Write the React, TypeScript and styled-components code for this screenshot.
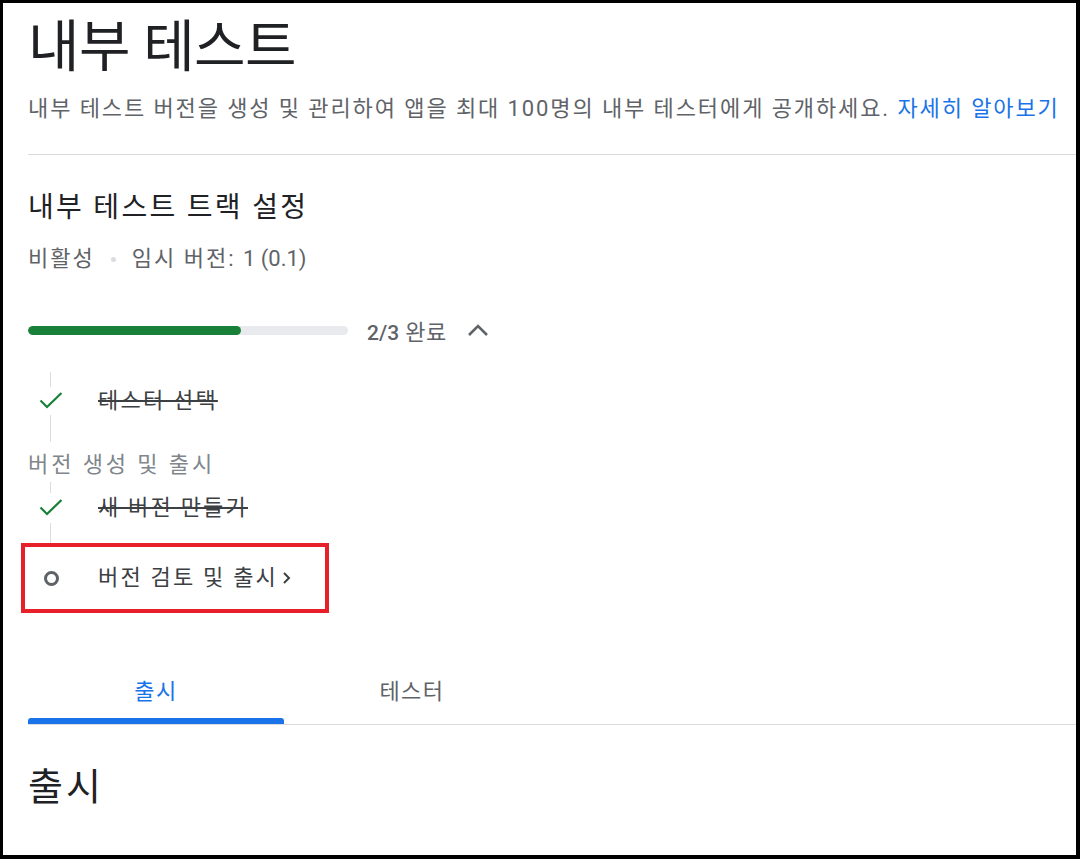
import styled, { createGlobalStyle } from "styled-components";

const GlobalStyle = createGlobalStyle`
  html, body {
    margin: 0;
    padding: 0;
    background: #ffffff;
  }
  * {
    box-sizing: border-box;
  }
`;

type Step = {
  label: string;
  done: boolean;
};

const FIRST_STEPS: Step[] = [{ label: "테스터 선택", done: true }];
const SECOND_STEPS: Step[] = [{ label: "새 버전 만들기", done: true }];

const CheckIcon = () => (
  <svg width="24" height="18" viewBox="0 0 24 18">
    <polyline
      points="1.5,8.5 8,15 22.5,1"
      fill="none"
      stroke="#188038"
      strokeWidth="2.2"
    />
  </svg>
);

const ChevronUp = () => (
  <svg width="22" height="14" viewBox="0 0 22 14">
    <polyline
      points="2,12 11,3 20,12"
      fill="none"
      stroke="#5f6368"
      strokeWidth="2.6"
    />
  </svg>
);

const ChevronRight = () => (
  <svg width="9" height="14" viewBox="0 0 9 14">
    <polyline
      points="2,2 7,7 2,12"
      fill="none"
      stroke="#3c4043"
      strokeWidth="2"
    />
  </svg>
);

const App = (): JSX.Element => {
  const total = 3;
  const completed = 2;

  return (
    <>
      <GlobalStyle />
      <Frame>
        <Content>
          <Title>내부 테스트</Title>
          <Subtitle>
            내부 테스트 버전을 생성 및 관리하여 앱을 최대 100명의 내부
            테스터에게 공개하세요. <Link>자세히 알아보기</Link>
          </Subtitle>
          <Divider />

          <SectionTitle>내부 테스트 트랙 설정</SectionTitle>
          <StatusLine>
            <span>비활성</span>
            <Dot />
            <span>
              임시 버전: <Num>1 (0.1)</Num>
            </span>
          </StatusLine>

          <ProgressRow>
            <Track>
              <Fill style={{ width: `${(completed / total) * 100}%` }} />
            </Track>
            <ProgressLabel>
              <strong>
                {completed}/{total}
              </strong>{" "}
              완료
            </ProgressLabel>
            <ChevronUp />
          </ProgressRow>

          <Timeline>
            <Connector $h={15} />
            {FIRST_STEPS.map((s) => (
              <StepRow key={s.label} $h={28}>
                <IconCol>
                  <CheckIcon />
                </IconCol>
                <StepText $done={s.done}>{s.label}</StepText>
              </StepRow>
            ))}
            <Connector $h={27} />
            <GroupLabel>버전 생성 및 출시</GroupLabel>
            <Connector $h={11} />
            {SECOND_STEPS.map((s) => (
              <StepRow key={s.label} $h={30}>
                <IconCol>
                  <CheckIcon />
                </IconCol>
                <StepText $done={s.done}>{s.label}</StepText>
              </StepRow>
            ))}
            <Connector $h={20} />
            <Highlight>
              <StepRow $h={62}>
                <IconCol>
                  <Ring />
                </IconCol>
                <StepText $done={false}>
                  버전 검토 및 출시
                  <ChevronRight />
                </StepText>
              </StepRow>
            </Highlight>
          </Timeline>

          <Tabs>
            <Tab $active>출시</Tab>
            <Tab>테스터</Tab>
          </Tabs>

          <PanelTitle>출시</PanelTitle>
        </Content>
      </Frame>
    </>
  );
};

const FONT = `Roboto, "Noto Sans CJK KR", sans-serif`;

const Frame = styled.div`
  width: 1080px;
  height: 859px;
  border-style: solid;
  border-color: #000000;
  border-width: 3px 4px 4px 3px;
  background: #ffffff;
  overflow: hidden;
  font-family: ${FONT};
`;

const Content = styled.div`
  display: flex;
  flex-direction: column;
  padding: 12px 0 0 25px;
`;

const Title = styled.h1`
  margin: 0;
  font-size: 56px;
  line-height: 64px;
  font-weight: 400;
  letter-spacing: -0.6px;
  color: #202124;
`;

const Subtitle = styled.p`
  margin: 16px 0 0;
  font-size: 22px;
  line-height: 28px;
  letter-spacing: 1.9px;
  color: #5f6368;
  white-space: nowrap;
`;

const Link = styled.a`
  color: #1a73e8;
  text-decoration: none;
  cursor: pointer;
`;

const Divider = styled.div`
  margin-top: 31px;
  height: 1px;
  background: #dadce0;
`;

const SectionTitle = styled.h2`
  margin: 35px 0 0;
  font-size: 28px;
  line-height: 36px;
  font-weight: 400;
  letter-spacing: 2.3px;
  color: #202124;
`;

const StatusLine = styled.div`
  margin-top: 19px;
  display: flex;
  align-items: center;
  gap: 16px;
  font-size: 22px;
  line-height: 28px;
  letter-spacing: 2px;
  color: #5f6368;
`;

const Num = styled.span`
  letter-spacing: 0;
`;

const Dot = styled.span`
  width: 5px;
  height: 5px;
  border-radius: 50%;
  background: #dadce0;
`;

const ProgressRow = styled.div`
  margin-top: 45px;
  height: 24px;
  display: flex;
  align-items: center;
`;

const Track = styled.div`
  width: 320px;
  height: 9px;
  border-radius: 5px;
  background: #e8eaed;
  overflow: hidden;
`;

const Fill = styled.div`
  height: 100%;
  border-radius: 5px;
  background: #188038;
`;

const ProgressLabel = styled.span`
  margin: 0 20px 0 19px;
  font-size: 22px;
  letter-spacing: 0.6px;
  color: #5f6368;

  strong {
    font-weight: 500;
    font-size: 21px;
    letter-spacing: 0;
  }
`;

const Timeline = styled.div`
  margin-top: 30px;
  display: flex;
  flex-direction: column;
`;

const Connector = styled.div<{ $h: number }>`
  width: 1px;
  height: ${(p) => p.$h}px;
  margin-left: 22px;
  background: #dadce0;
`;

const StepRow = styled.div<{ $h: number }>`
  height: ${(p) => p.$h}px;
  display: flex;
  align-items: center;
`;

const IconCol = styled.div`
  width: 46px;
  display: flex;
  justify-content: center;
`;

const StepText = styled.span<{ $done: boolean }>`
  margin-left: 24px;
  display: inline-flex;
  align-items: center;
  gap: 4px;
  font-size: 22px;
  line-height: 28px;
  letter-spacing: 2.2px;
  color: #3c4043;
  text-decoration: ${(p) => (p.$done ? "line-through" : "none")};
  text-decoration-thickness: 2px;
`;

const GroupLabel = styled.div`
  height: 40px;
  display: flex;
  align-items: center;
  font-size: 22px;
  letter-spacing: 2.9px;
  color: #80868b;
`;

const Highlight = styled.div`
  width: 308px;
  margin-left: -7px;
  padding-left: 3px;
  border: 4px solid #e8202a;
`;

const Ring = styled.span`
  width: 15px;
  height: 15px;
  border-radius: 50%;
  border: 3px solid #5f6368;
`;

const Tabs = styled.div`
  margin-top: 59px;
  display: flex;
  border-bottom: 1px solid #dadce0;
`;

const Tab = styled.div<{ $active?: boolean }>`
  position: relative;
  width: 256px;
  height: 52px;
  text-align: center;
  font-size: 22px;
  line-height: 40px;
  letter-spacing: 1.5px;
  color: ${(p) => (p.$active ? "#1a73e8" : "#5f6368")};

  &::after {
    content: "";
    display: ${(p) => (p.$active ? "block" : "none")};
    position: absolute;
    left: 0;
    right: 0;
    bottom: 0;
    height: 6px;
    border-radius: 3px 3px 0 0;
    background: #1a73e8;
  }
`;

const PanelTitle = styled.h2`
  margin: 38px 0 0;
  font-size: 38px;
  line-height: 48px;
  font-weight: 400;
  letter-spacing: 3px;
  color: #202124;
`;

export default App;
